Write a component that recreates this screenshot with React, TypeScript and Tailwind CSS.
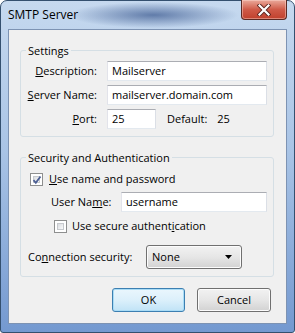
import React from "react";

// Win7-style checkbox
const CheckBox = ({ checked }: { checked?: boolean }) => (
  <span className="relative flex h-[13px] w-[13px] shrink-0 border border-[#8e8f8f] bg-white p-[2px]">
    <span className="flex-1 border border-[#c6c9cd] bg-gradient-to-br from-[#d9dce0] to-[#fbfbfb]" />
    {checked && (
      <svg className="absolute left-[1px] top-[1px]" width="10" height="10" viewBox="0 0 10 10">
        <path d="M1.5 5.2 L3.8 7.8 L8.5 1.5" fill="none" stroke="#4c5f94" strokeWidth="1.8" />
      </svg>
    )}
  </span>
);

const TextBox = ({ value, className }: { value: string; className: string }) => (
  <div
    className={`flex h-[20px] items-center border border-[#abadb3] border-b-[#e3e9ef] border-l-[#e2e3ea] border-r-[#dbdfe6] bg-white pl-[4px] ${className}`}
  >
    {value}
  </div>
);

const Button = ({ label, isDefault, className }: { label: string; isDefault?: boolean; className: string }) => (
  <div
    className={`flex h-[24px] items-center justify-center rounded-[3px] border ${
      isDefault
        ? "border-[#3c7fb1] bg-gradient-to-b from-[#eaf6fd] via-[#dcf0fb] to-[#c0e3f6] shadow-[inset_0_0_0_1px_#a9dcf6]"
        : "border-[#707070] bg-gradient-to-b from-[#f2f2f2] via-[#e6e6e6] to-[#d2d2d2] shadow-[inset_0_0_0_1px_#fcfcfc]"
    } ${className}`}
  >
    {label}
  </div>
);

export default function App() {
  return (
    <div className="flex h-[333px] w-[295px] flex-col rounded-t-[7px] rounded-b-[3px] border border-[#34506f] bg-[radial-gradient(ellipse_85px_13px_at_52%_14px,rgba(55,85,140,0.7),transparent),linear-gradient(to_bottom,#c6d9ef,#a9c4e6_45%,#7499d0)] px-[7px] pb-[8px] font-['Open_Sans',sans-serif] text-[11px] text-black">
      {/* title bar */}
      <div className="flex h-[28px] items-start justify-between">
        <span className="pt-[6px] text-[12px] leading-[16px]">SMTP Server</span>
        <div className="-mt-px flex h-[20px] w-[46px] items-center justify-center rounded-b-[4px] border border-t-0 border-[#5a2a24] bg-gradient-to-b from-[#e9a99b] via-[#cf5a48] to-[#c0402c] shadow-[inset_0_0_0_1px_rgba(255,220,210,0.45)]">
          <svg width="14" height="12" viewBox="0 0 14 12">
            <path d="M2.5 1.5 L11.5 10.5 M11.5 1.5 L2.5 10.5" stroke="#5b2620" strokeWidth="4" strokeLinecap="square" />
            <path d="M2.5 1.5 L11.5 10.5 M11.5 1.5 L2.5 10.5" stroke="#ffffff" strokeWidth="2.2" strokeLinecap="square" />
          </svg>
        </div>
      </div>

      {/* client area */}
      <div className="flex flex-1 flex-col border border-[#7d93b3] bg-[#f0f0f0]">
        {/* Settings */}
        <fieldset className="ml-[11px] mt-[13px] w-[254px] rounded-[3px] border border-[#d5dfe5] pb-[7px] pt-[3px]">
          <legend className="ml-[5px] px-[2px] leading-[15px]">Settings</legend>
          <div className="flex flex-col gap-[4px]">
            <div className="flex items-center">
              <span className="w-[76px] text-right">
                <u>D</u>escription:
              </span>
              <TextBox value="Mailserver" className="ml-[10px] w-[160px]" />
            </div>
            <div className="flex items-center">
              <span className="w-[76px] text-right">
                <u>S</u>erver Name:
              </span>
              <TextBox value="mailserver.domain.com" className="ml-[10px] w-[160px]" />
            </div>
            <div className="flex items-center">
              <span className="w-[76px] text-right">
                <u>P</u>ort:
              </span>
              <TextBox value="25" className="ml-[10px] w-[49px]" />
              <span className="ml-[11px]">Default:</span>
              <span className="ml-[10px]">25</span>
            </div>
          </div>
        </fieldset>

        {/* Security and Authentication */}
        <fieldset className="ml-[11px] mt-[13px] w-[254px] rounded-[3px] border border-[#d5dfe5] pb-[7px] pt-[7px]">
          <legend className="ml-[5px] px-[2px] leading-[15px]">Security and Authentication</legend>
          <div className="flex h-[15px] items-center pl-[9px]">
            <CheckBox checked />
            <span className="ml-[6px]">
              <u>U</u>se name and password
            </span>
          </div>
          <div className="mt-[5px] flex items-center pl-[30px]">
            <span className="w-[70px]">
              User Na<u>m</u>e:
            </span>
            <TextBox value="username" className="w-[146px] border-[#7eb4ea] border-b-[#c5daed] border-l-[#b7d5f0] border-r-[#b7d5f0]" />
          </div>
          <div className="mt-[7px] flex h-[15px] items-center pl-[33px]">
            <CheckBox />
            <span className="ml-[5px]">
              Use secure authent<u>i</u>cation
            </span>
          </div>
          <div className="mt-[11px] flex items-center pl-[7px]">
            <span className="w-[118px]">
              Co<u>n</u>nection security:
            </span>
            <div className="flex h-[24px] w-[96px] items-center justify-between rounded-[3px] border border-[#707070] bg-gradient-to-b from-[#f2f2f2] via-[#e6e6e6] to-[#d2d2d2] pl-[5px] pr-[9px] shadow-[inset_0_0_0_1px_#fcfcfc]">
              <span>None</span>
              <svg width="7" height="4" viewBox="0 0 7 4">
                <path d="M0 0 H7 L3.5 4 Z" fill="#000" />
              </svg>
            </div>
          </div>
        </fieldset>

        {/* buttons */}
        <div className="mt-[11px] flex justify-end gap-[12px] pr-[15px]">
          <Button label="OK" isDefault className="w-[73px]" />
          <Button label="Cancel" className="w-[74px]" />
        </div>
      </div>
    </div>
  );
}
